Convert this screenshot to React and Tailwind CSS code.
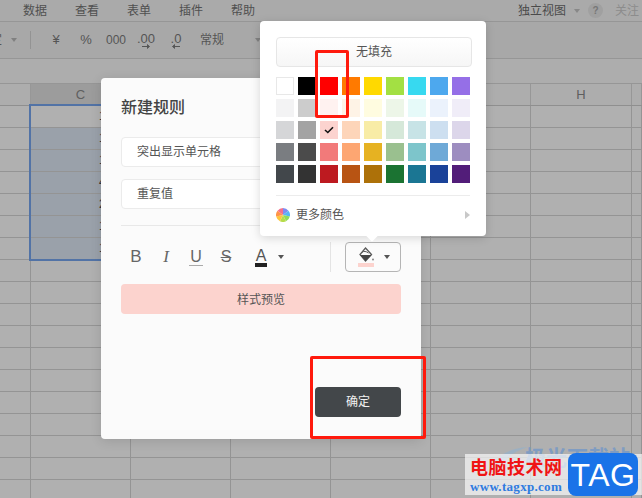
import React from "react";

const FONT = "font-['Liberation_Sans','Noto_Sans_CJK_SC',sans-serif]";

const SWATCHES = [
  ["#ffffff", "#000000", "#ff0000", "#ff7a00", "#ffd900", "#a3e043", "#37d9f0", "#4da8ee", "#956fe7"],
  ["#f3f3f4", "#cccccc", "#fff2f0", "#fef3e6", "#fffce0", "#edf6e8", "#e6faf9", "#ebf2fc", "#f0edf8"],
  ["#d5d6d8", "#a3a3a3", "#fcd3cf", "#fdd5b9", "#f8eca6", "#d5e8d9", "#c7e3e6", "#cddff0", "#dcd6ea"],
  ["#7a7d81", "#4b4b4b", "#f27a7a", "#fda672", "#e6b222", "#9ac08f", "#7dc5cb", "#6ea9d7", "#9d8dc0"],
  ["#42474b", "#333333", "#bd1a20", "#b85413", "#ad7109", "#1b7332", "#1b7693", "#1a4299", "#521d79"],
];

const WIDTHS = ["w-[31px]", "w-[100px]", "w-[100px]", "w-[100px]", "w-[100px]", "w-[100px]", "w-[101px]", "w-[10px]"];
const DIGITS = ["1", "1", "1", "4", "2", "1", "1"];

function Caret({ className = "border-t-[#777]" }) {
  return <span className={`block h-0 w-0 flex-none border-x-[3px] border-t-[4px] border-x-transparent ${className}`} />;
}

function ShiftIcon({ text, dir }) {
  return (
    <span className="flex flex-col items-center leading-none">
      <span className="text-[13px] leading-[13px]">{text}</span>
      <svg width="10" height="5" viewBox="0 0 10 5" className="-mt-px">
        {dir === "right" ? (
          <path d="M1 2.5H8M6 0.5L8.5 2.5L6 4.5" stroke="#555" fill="#555" strokeWidth="1" />
        ) : (
          <path d="M9 2.5H2M4 0.5L1.5 2.5L4 4.5" stroke="#555" fill="#555" strokeWidth="1" />
        )}
      </svg>
    </span>
  );
}

function Wheel() {
  const colors = ["#7d8cf2", "#56b4f7", "#8fdc5a", "#b6dc4a", "#ffc53d", "#ff9448", "#f5708a"];
  const n = colors.length;
  const pt = (a) => [7 + 7 * Math.sin(a), 7 - 7 * Math.cos(a)];
  return (
    <svg width="14" height="14" viewBox="0 0 14 14" className="flex-none">
      {colors.map((c, i) => {
        const [x1, y1] = pt((i / n) * 2 * Math.PI);
        const [x2, y2] = pt(((i + 1) / n) * 2 * Math.PI);
        return <path key={c} d={`M7 7L${x1} ${y1}A7 7 0 0 1 ${x2} ${y2}Z`} fill={c} />;
      })}
    </svg>
  );
}

function Bucket() {
  return (
    <svg width="18" height="20" viewBox="0 0 18 20" className="block">
      <path d="M8.5 1L14.5 7.5L8.5 14L3 7.5Z" fill="#fbfbfb" stroke="#5a5a5a" strokeWidth="1.3" />
      <path d="M3 8H14.5L8.5 14Z" fill="#444" />
      <path d="M4.5 5.5C7 3.8 9 4.2 11.5 6" fill="none" stroke="#5a5a5a" strokeWidth="1" />
      <circle cx="16" cy="12.5" r="0.9" fill="#777" />
      <rect x="1" y="16" width="16" height="4" fill="#fcd3ce" />
    </svg>
  );
}

function Sheet() {
  return (
    <div className="flex flex-col">
      <div className="flex h-[22px] flex-none items-center whitespace-nowrap border-b border-[#969696] bg-[#aaaaaa] pl-[23px] text-[12px] text-[#505050]">
        <span className="flex-none">数据</span>
        <span className="ml-7 flex-none">查看</span>
        <span className="ml-7 flex-none">表单</span>
        <span className="ml-7 flex-none">插件</span>
        <span className="ml-7 flex-none">帮助</span>
        <span className="ml-[263px] flex-none text-[#4a4a4a]">独立视图</span>
        <Caret className="ml-2 border-t-[#888]" />
        <span className="ml-2 flex h-[15px] w-[15px] flex-none items-center justify-center rounded-full bg-[#a0a0a0] text-[10px] font-bold text-[#777]">?</span>
        <span className="ml-3 flex-none text-[#8c8c8c]">关注</span>
      </div>
      <div className="flex h-[37px] flex-none items-center overflow-hidden whitespace-nowrap border-b border-[#969696] bg-[#a8a8a8] text-[#555]">
        <span className="-ml-[10px] w-3 flex-none text-[12px]">定</span>
        <Caret className="ml-[9px] border-t-[#808080]" />
        <span className="ml-[13px] h-[18px] w-px flex-none bg-[#939393]" />
        <span className="ml-[10px] flex w-[30px] flex-none justify-center text-[13px]">¥</span>
        <span className="flex w-[30px] flex-none justify-center text-[13px]">%</span>
        <span className="flex w-[30px] flex-none justify-center text-[12px]">000</span>
        <span className="flex w-[30px] flex-none justify-center"><ShiftIcon text=".00" dir="right" /></span>
        <span className="flex w-[30px] flex-none justify-center"><ShiftIcon text=".0" dir="left" /></span>
        <span className="ml-[9px] flex-none text-[12px]">常规</span>
        <Caret className="ml-[31px] border-t-[#808080]" />
      </div>
      <div className="h-[25px] flex-none border-b border-[#969696] bg-[#adadad]" />
      <div className="flex h-[22px] flex-none border-b border-[#8f8f8f] bg-[#adadad] text-[13px] text-[#5f5f5f]">
        {WIDTHS.map((w, i) => (
          <div
            key={i}
            className={`${w} flex flex-none items-center justify-center border-r border-[#979797] ${i === 1 ? "bg-[#9c9c9c]" : ""}`}
          >
            {["", "C", "", "", "", "", "H", ""][i]}
          </div>
        ))}
      </div>
      {Array.from({ length: 18 }).map((_, r) => (
        <div key={r} className="flex h-[22px] flex-none border-b border-[#949494] bg-[#b0b0b0]">
          {WIDTHS.map((w, c) => (
            <div
              key={c}
              className={`${w} flex-none border-r border-[#949494] ${c === 1 && r >= 1 && r <= 6 ? "bg-[#9aa1aa]" : ""} ${c === 1 ? "pl-[68px] text-[12px] leading-[21px] text-[#333]" : ""}`}
            >
              {c === 1 && r <= 6 ? DIGITS[r] : ""}
            </div>
          ))}
        </div>
      ))}
    </div>
  );
}

function Modal() {
  return (
    <div className="absolute left-[101px] top-[78px] flex h-[361px] w-[320px] flex-col rounded-sm bg-[#fbfbfb] px-5 pb-[22px] pt-[18px] shadow-[0_2px_12px_rgba(0,0,0,0.12)]">
      <div className="h-6 text-[16px] font-medium leading-6 text-[#444]">新建规则</div>
      <div className="mt-[17px] flex h-[30px] flex-none items-center rounded-sm border border-[#ebebeb] bg-white pl-[15px] text-[12px] text-[#555]">突出显示单元格</div>
      <div className="mt-3 flex h-[30px] flex-none items-center rounded-sm border border-[#ebebeb] bg-white pl-[15px] text-[12px] text-[#555]">重复值</div>
      <div className="mt-4 h-px flex-none bg-[#e8e8e8]" />
      <div className="mt-4 flex h-[30px] flex-none items-center text-[17px] text-[#666]">
        <span className="flex w-[30px] justify-center">B</span>
        <span className="flex w-[30px] justify-center font-['Liberation_Serif',serif] italic">I</span>
        <span className="flex w-[30px] justify-center"><span className="border-b border-[#aaa] px-px text-[16px] leading-[17px]">U</span></span>
        <span className="flex w-[30px] justify-center text-[16px] line-through">S</span>
        <span className="ml-[5px] flex w-[30px] justify-center"><span className="border-b-[4px] border-[#222] px-[1px] text-[16px] leading-[15px] text-[#555]">A</span></span>
        <Caret className="ml-[2px] border-t-[#555]" />
        <span className="ml-auto h-[30px] w-px bg-[#e4e4e4]" />
        <span className="ml-[14px] flex h-[30px] w-[56px] items-center rounded-sm border border-[#b5b5b5] pl-[11px]">
          <Bucket />
          <Caret className="ml-[9px] border-t-[#555]" />
        </span>
      </div>
      <div className="mt-3 flex h-[30px] flex-none items-center justify-center rounded-sm bg-[#fcd3ce] pt-px text-[12px] text-[#555]">样式预览</div>
      <div className="mt-auto flex h-[30px] w-[86px] flex-none items-center justify-center self-end rounded-sm bg-[#43474a] text-[12px] text-[#f2f2f2]">确定</div>
    </div>
  );
}

function Popover() {
  return (
    <div className="absolute left-[260px] top-[21px] flex h-[215px] w-[226px] flex-col rounded-sm bg-white pl-4 pt-4 shadow-[0_2px_10px_rgba(0,0,0,0.15)]">
      <div className="flex h-[30px] w-[196px] flex-none items-center justify-center rounded-sm border border-[#e6e6e6] bg-linear-to-b from-white to-[#f6f6f6] text-[12px] text-[#555]">无填充</div>
      <div className="mt-[10px] flex flex-col gap-1">
        {SWATCHES.map((row, r) => (
          <div key={r} className="flex gap-1">
            {row.map((c, i) => (
              <span
                key={i}
                className={`flex h-[18px] w-[18px] flex-none items-center justify-center ${r === 0 && i === 0 ? "border border-[#e8e8e8]" : ""}`}
                style={{ backgroundColor: c }}
              >
                {r === 2 && i === 2 && (
                  <svg width="10" height="8" viewBox="0 0 10 8">
                    <path d="M1 4L3.8 6.5L9 1.2" fill="none" stroke="#111" strokeWidth="1.6" />
                  </svg>
                )}
              </span>
            ))}
          </div>
        ))}
      </div>
      <div className="mt-3 h-px w-[194px] flex-none bg-[#ececec]" />
      <div className="mt-3 flex h-[14px] w-[194px] flex-none items-center">
        <Wheel />
        <span className="ml-[6px] text-[12px] text-[#555]">更多颜色</span>
        <span className="ml-auto h-0 w-0 border-y-[4px] border-l-[5px] border-y-transparent border-l-[#c8c8c8]" />
      </div>
      <span className="absolute left-[108px] top-[211px] h-[8px] w-[8px] rotate-45 bg-white" />
    </div>
  );
}

function Watermark() {
  return (
    <>
      <svg width="40" height="22" viewBox="0 0 40 22" className="absolute left-[490px] top-[446px]">
        <path d="M2 20C8 8 22 2 38 1C26 5 16 10 12 20Z" fill="#8fb0cf" opacity="0.6" />
      </svg>
      <div className="absolute left-[525px] top-[445px] whitespace-nowrap text-[21px] font-bold leading-[26px] text-[#7f9cc2]">极光下载站</div>
      <div className="absolute left-[465px] top-[454px] flex h-[41px] w-[177px] flex-col bg-white/65 pl-[5px]">
        <span className="mt-[2px] text-[18px] font-bold leading-[24px] tracking-[0.5px] text-[#f01414]">电脑技术网</span>
        <span className="font-['Liberation_Serif',serif] text-[13px] font-bold leading-[14px] tracking-[0.3px] text-[#2f7be0]">www.tagxp.com</span>
      </div>
      <div className="absolute left-[568px] top-[453px] flex h-[43px] w-[70px] items-center justify-center overflow-hidden rounded-lg bg-[#1a73e8] text-[32px] leading-none tracking-[0.5px] text-white">TAG</div>
    </>
  );
}

export default function App() {
  return (
    <div className={`relative h-[498px] w-[642px] overflow-hidden bg-[#b0b0b0] ${FONT}`}>
      <Sheet />
      <div className="absolute left-[29px] top-[104px] h-[157px] w-[102px] border-2 border-[#5273a6]" />
      <Modal />
      <Popover />
      <div className="absolute left-[315px] top-[50px] h-[68px] w-[34px] rounded-[2px] border-[3px] border-[#ff1a0d]" />
      <div className="absolute left-[310px] top-[356px] h-[83px] w-[116px] rounded-[2px] border-[3px] border-[#ff1a0d]" />
      <Watermark />
    </div>
  );
}
